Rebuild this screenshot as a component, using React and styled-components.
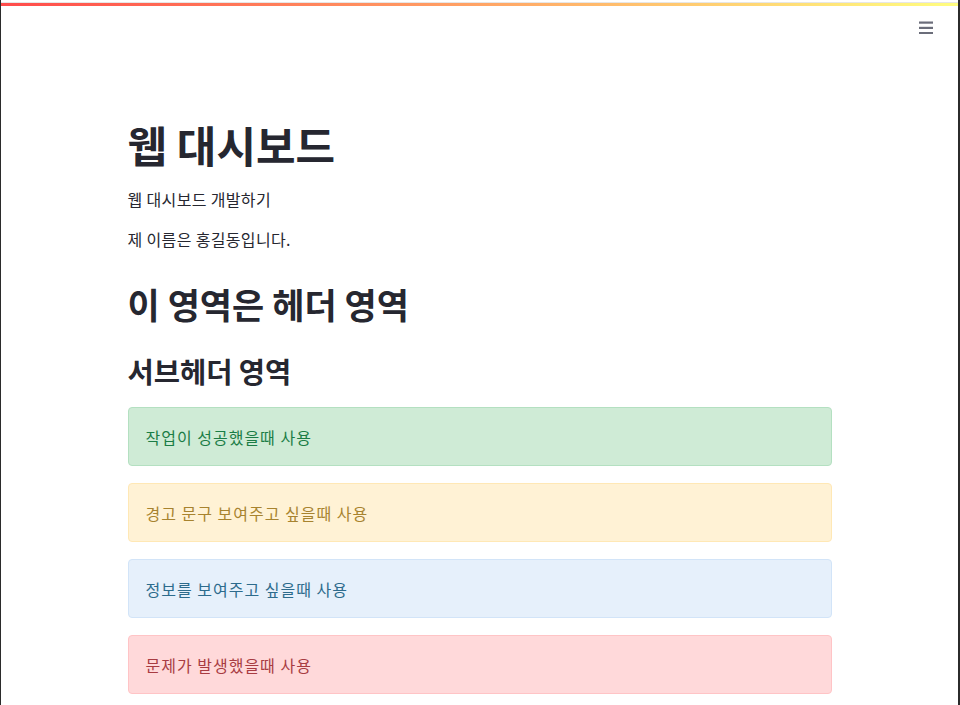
import React from 'react';
import styled, { createGlobalStyle } from 'styled-components';

const GlobalStyle = createGlobalStyle`
  html, body {
    margin: 0;
    padding: 0;
    background: #ffffff;
  }
  * {
    box-sizing: border-box;
  }
`;

const Page = styled.div`
  height: 705px;
  overflow: hidden;
  border-left: 1px solid #2b2b2b;
  border-right: 2px solid #2b2b2b;
  background: #ffffff;
  font-family: "Noto Sans CJK KR", "Noto Sans", sans-serif;
  color: #262730;
  display: flex;
  flex-direction: column;
`;

const Decoration = styled.div`
  margin-top: 2px;
  border-top: 1px solid #e6e6e6;
  height: 4px;
  background: linear-gradient(90deg, rgb(255, 75, 75), rgb(255, 253, 128));
`;

const Toolbar = styled.header`
  height: 42px;
  display: flex;
  justify-content: flex-end;
  align-items: center;
  padding-right: 25px;
`;

const MenuButton = styled.svg`
  width: 14px;
  height: 14px;
  fill: #6b6d7a;
`;

const Main = styled.main`
  width: 704px;
  margin: 0 auto;
  padding-top: 70px;
  display: flex;
  flex-direction: column;
`;

const Title = styled.h1`
  margin: 0;
  font-size: 43px;
  line-height: 52px;
  font-weight: 700;
  color: #262730;
`;

const Text = styled.p`
  margin: ${(props) => props.gap}px 0 0;
  font-size: 16px;
  line-height: 24px;
  letter-spacing: 0.35px;
  font-weight: 400;
  color: #262730;
`;

const Header = styled.h2`
  margin: 31px 0 0;
  font-size: 35px;
  line-height: 44px;
  font-weight: 700;
`;

const Subheader = styled.h3`
  margin: 26px 0 0;
  font-size: 28.5px;
  line-height: 38px;
  font-weight: 700;
`;

const alertColors = {
  success: { bg: '#cfebd6', border: '#b4e0c1', text: '#1b7d46' },
  warning: { bg: '#fff2d5', border: '#ffe8b5', text: '#a7832f' },
  info: { bg: '#e6f0fb', border: '#d2e4f8', text: '#2d6b8c' },
  error: { bg: '#ffd9da', border: '#ffc4c6', text: '#a83c42' },
};

const AlertList = styled.div`
  margin-top: 17px;
  display: flex;
  flex-direction: column;
  gap: 17px;
`;

const Alert = styled.div`
  height: 59px;
  display: flex;
  align-items: center;
  padding: 0 17px;
  border-radius: 4px;
  border: 1px solid ${(props) => alertColors[props.kind].border};
  background: ${(props) => alertColors[props.kind].bg};
  color: ${(props) => alertColors[props.kind].text};
  font-size: 16px;
  line-height: 24px;
  letter-spacing: 1px;
`;

const alerts = [
  { kind: 'success', text: '작업이 성공했을때 사용' },
  { kind: 'warning', text: '경고 문구 보여주고 싶을때 사용' },
  { kind: 'info', text: '정보를 보여주고 싶을때 사용' },
  { kind: 'error', text: '문제가 발생했을때 사용' },
];

export default function App() {
  return (
    <>
      <GlobalStyle />
      <Page>
        <Decoration />
        <Toolbar>
          <MenuButton viewBox="0 0 14 14" xmlns="http://www.w3.org/2000/svg">
            <rect x="0" y="1.5" width="14" height="2.2" />
            <rect x="0" y="6.8" width="14" height="2.2" />
            <rect x="0" y="12" width="14" height="2.2" />
          </MenuButton>
        </Toolbar>
        <Main>
          <Title>웹 대시보드</Title>
          <Text gap={17}>웹 대시보드 개발하기</Text>
          <Text gap={16}>제 이름은 홍길동입니다.</Text>
          <Header>이 영역은 헤더 영역</Header>
          <Subheader>서브헤더 영역</Subheader>
          <AlertList>
            {alerts.map((a) => (
              <Alert key={a.kind} kind={a.kind}>{a.text}</Alert>
            ))}
          </AlertList>
        </Main>
      </Page>
    </>
  );
}
